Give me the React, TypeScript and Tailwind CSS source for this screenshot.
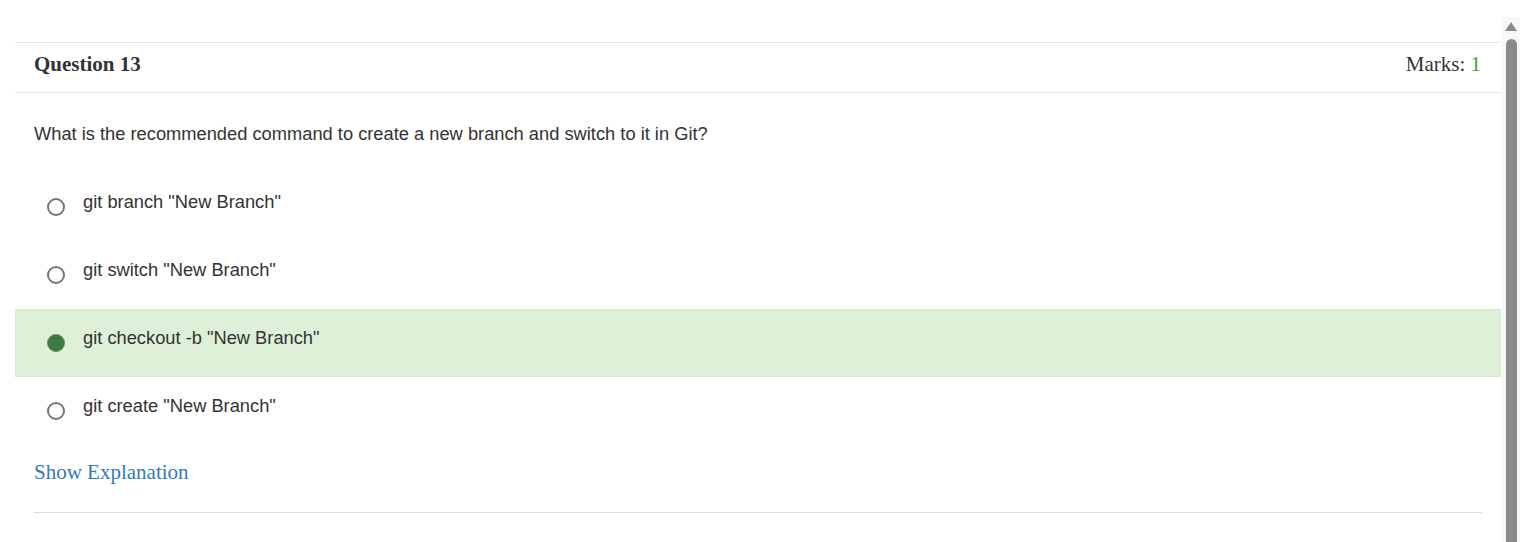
import React from "react"

const options = [
  { label: 'git branch "New Branch"', selected: false },
  { label: 'git switch "New Branch"', selected: false },
  { label: 'git checkout -b "New Branch"', selected: true },
  { label: 'git create "New Branch"', selected: false },
]

const serif = "font-['Liberation_Serif','Times_New_Roman',serif]"
const sans = "font-['Liberation_Sans',Arial,sans-serif]"

const Radio = ({ checked }: { checked: boolean }) =>
  checked ? (
    <span className="mt-[24px] block w-[18px] h-[18px] rounded-full bg-[#3b7a3e] border border-[#5e8f5e] shrink-0" />
  ) : (
    <span className="mt-[24px] block w-[18px] h-[18px] rounded-full border-2 border-[#767676] bg-white shrink-0" />
  )

export default function App() {
  return (
    <div className="flex h-[542px] w-full bg-white overflow-hidden">
      {/* content */}
      <div className="flex-1 pl-[15px] pt-[42px]">
        <div className="flex items-center justify-between h-[51px] pb-[6px] border-t border-b border-[#e5e5e5] px-[19px] pr-[20px]">
          <span className={`${serif} text-[21px] font-bold text-[#333]`}>Question 13</span>
          <span className={`${serif} text-[21px] text-[#333]`}>
            Marks: <span className="text-[#3c9f3c]">1</span>
          </span>
        </div>

        <div className={`${sans} text-[18.3px] leading-[22px] text-[#333] px-[19px] pt-[30px] pb-[28px]`}>
          What is the recommended command to create a new branch and switch to it in Git?
        </div>

        <div className="flex flex-col">
          {options.map((o) => (
            <div
              key={o.label}
              className={`flex items-start h-[68px] pl-[31px] ${
                o.selected ? "bg-[#dff0d8] border border-[#d6e9c6]" : "border border-transparent"
              }`}
            >
              <Radio checked={o.selected} />
              <span className={`${sans} text-[18.3px] leading-[22px] text-[#333] mt-[17px] ml-[18px]`}>
                {o.label}
              </span>
            </div>
          ))}
        </div>

        <div className="px-[19px] pt-[15px]">
          <a className={`${serif} text-[21px] leading-[24px] text-[#337ab7] cursor-pointer`}>Show Explanation</a>
          <div className="mt-[27px] border-t border-[#dddddd]" />
        </div>
      </div>

      {/* scrollbar */}
      <div className="w-[22px] pl-[1px] pr-[3px]">
        <div className="mt-[17px] h-full bg-[#f7f7f7] flex flex-col items-center">
          <svg width="12" height="9" viewBox="0 0 12 9" className="mt-[5px]">
            <polygon points="6,0 12,9 0,9" fill="#8a8a8a" />
          </svg>
          <div className="mt-[8px] w-[11px] flex-1 rounded-t-full bg-[#8a8a8a]" />
        </div>
      </div>
    </div>
  )
}
